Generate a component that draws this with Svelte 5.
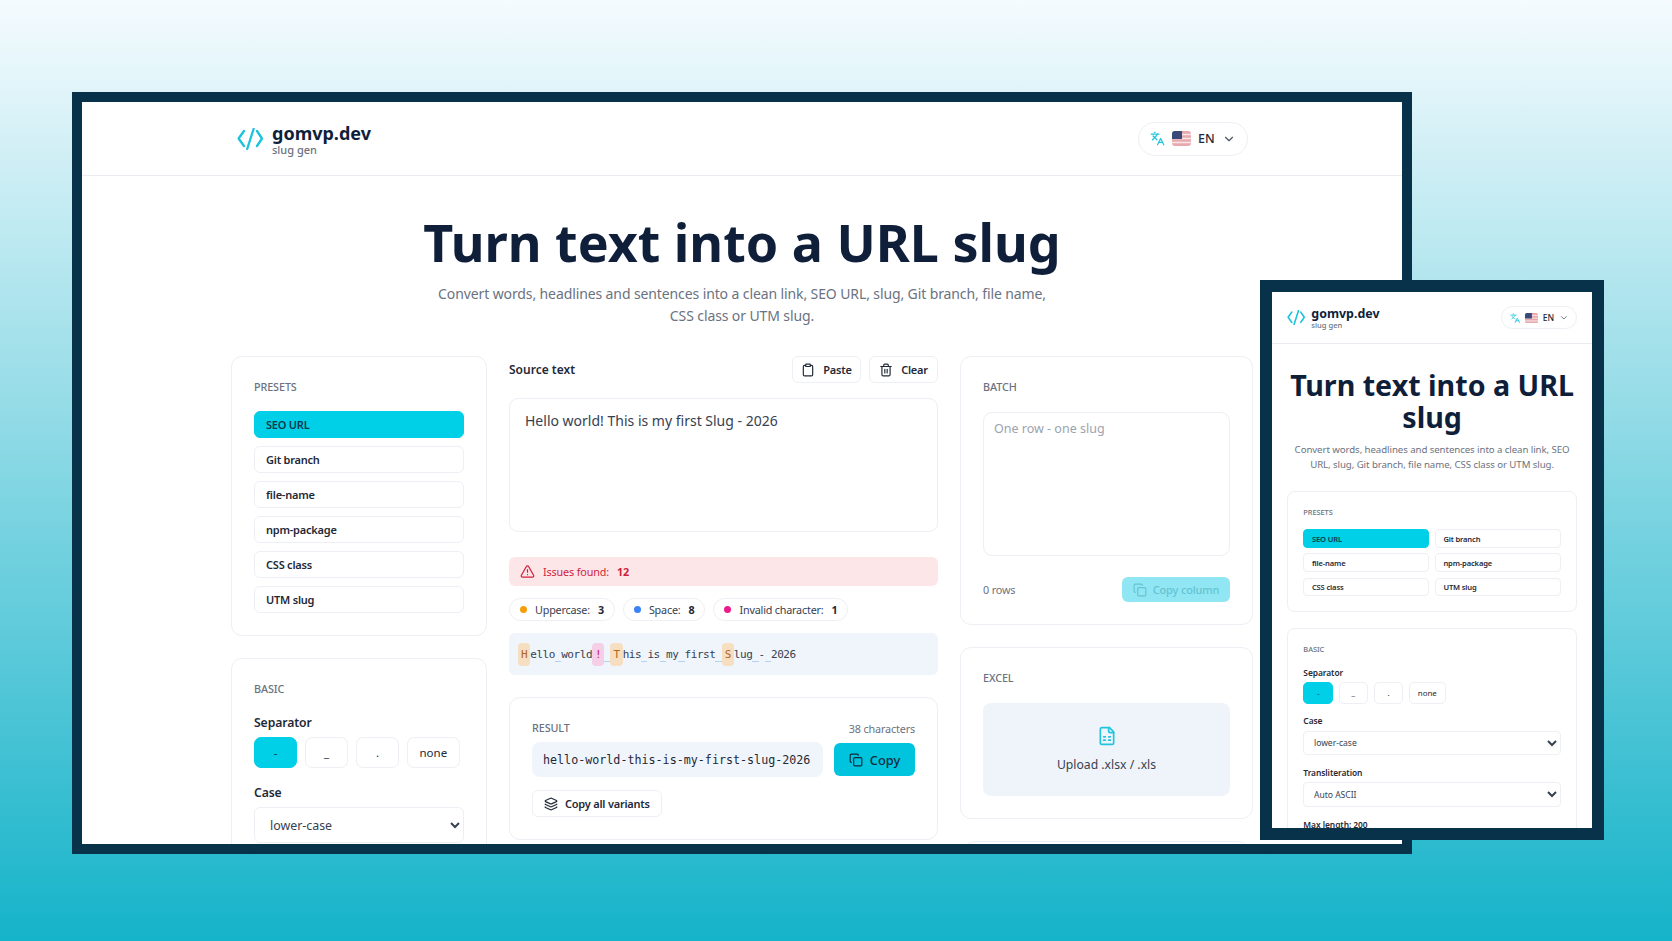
<script lang="ts">
	const presets = ['SEO URL', 'Git branch', 'file-name', 'npm-package', 'CSS class', 'UTM slug'];
	const separators = ['-', '_', '.', 'none'];
	const source = 'Hello world! This is my first Slug - 2026';
	const result = 'hello-world-this-is-my-first-slug-2026';

	const chips = [
		{ label: 'Uppercase:', value: 3, color: '#f59e0b' },
		{ label: 'Space:', value: 8, color: '#3b82f6' },
		{ label: 'Invalid character:', value: 1, color: '#ec1a8c' }
	];

	// mark every character of the preview the way the checker does
	function kind(c: string) {
		if (c === ' ') return 'sp';
		if (c >= 'A' && c <= 'Z') return 'up';
		if (c === '!') return 'bad';
		return '';
	}
	const marked = [...source].map((c) => ({ c, k: kind(c) }));
</script>

{#snippet topbar()}
	<header class="topbar">
		<div class="brand">
			<svg class="logo" viewBox="0 0 26 22" fill="none" stroke="#19c3dc" stroke-width="2.3" stroke-linecap="round" stroke-linejoin="round">
				<path d="M7 3 1.6 10.5 7 18" />
				<path d="M16.6 1 10.2 21" />
				<path d="M20 3 25 10.5 20 18" />
			</svg>
			<div>
				<div class="brand-name">gomvp.dev</div>
				<div class="brand-sub">slug gen</div>
			</div>
		</div>
		<div class="lang">
			<svg class="ic-lang" viewBox="0 0 24 24" fill="none" stroke="#22c5de" stroke-width="2" stroke-linecap="round" stroke-linejoin="round">
				<path d="m5 8 6 6" /><path d="m4 14 6-6 2-3" /><path d="M2 5h12" /><path d="M7 2h1" />
				<path d="m22 22-5-10-5 10" /><path d="M14 18h6" />
			</svg>
			<svg class="flag" viewBox="0 0 19 15">
				<rect width="19" height="15" rx="3" fill="#e8a9ae" />
				<path d="M0 3.5h19M0 7.5h19M0 11.5h19" stroke="#f7e6e8" stroke-width="1.4" />
				<path d="M3 0h7v8H0V3a3 3 0 0 1 3-3z" fill="#3a4a78" />
			</svg>
			<span>EN</span>
			<svg class="chev" viewBox="0 0 24 24" fill="none" stroke="#4b5563" stroke-width="2" stroke-linecap="round" stroke-linejoin="round"><path d="m6 9 6 6 6-6" /></svg>
		</div>
	</header>
{/snippet}

{#snippet hero()}
	<section class="hero">
		<h1>Turn text into a URL slug</h1>
		<p>Convert words, headlines and sentences into a clean link, SEO URL, slug, Git branch, file name, CSS class or UTM slug.</p>
	</section>
{/snippet}

{#snippet presetsCard()}
	<div class="card">
		<h2 class="label">Presets</h2>
		<div class="presets">
			{#each presets as p, i}
				<button class="preset" class:on={i === 0}>{p}</button>
			{/each}
		</div>
	</div>
{/snippet}

{#snippet basicCard()}
	<div class="card">
		<h2 class="label tight">Basic</h2>
		<div class="field">
			<span class="field-name">Separator</span>
			<div class="seps">
				{#each separators as s, i}
					<button class="sep" class:on={i === 0}>{s}</button>
				{/each}
			</div>
		</div>
		<div class="field">
			<span class="field-name">Case</span>
			<select><option>lower-case</option></select>
		</div>
		<div class="field">
			<span class="field-name">Transliteration</span>
			<select><option>Auto ASCII</option></select>
		</div>
		<div class="field">
			<span class="field-name">Max length: 200</span>
		</div>
	</div>
{/snippet}

{#snippet copyIcon()}
	<svg class="ic" viewBox="0 0 24 24" fill="none" stroke="currentColor" stroke-width="2" stroke-linecap="round" stroke-linejoin="round">
		<rect width="14" height="14" x="8" y="8" rx="2" ry="2" />
		<path d="M4 16c-1.1 0-2-.9-2-2V4c0-1.1.9-2 2-2h10c1.1 0 2 .9 2 2" />
	</svg>
{/snippet}

<div class="stage">
	<div class="window desktop">
		<div class="screen">
			{@render topbar()}
			{@render hero()}
			<main class="columns">
				<div class="col">
					{@render presetsCard()}
					{@render basicCard()}
				</div>

				<div class="col mid">
					<div class="source-head">
						<span class="source-title">Source text</span>
						<div class="source-actions">
							<button class="ghost">
								<svg class="ic" viewBox="0 0 24 24" fill="none" stroke="currentColor" stroke-width="2" stroke-linecap="round" stroke-linejoin="round">
									<rect width="8" height="4" x="8" y="2" rx="1" ry="1" />
									<path d="M16 4h2a2 2 0 0 1 2 2v14a2 2 0 0 1-2 2H6a2 2 0 0 1-2-2V6a2 2 0 0 1 2-2h2" />
								</svg>
								Paste
							</button>
							<button class="ghost">
								<svg class="ic" viewBox="0 0 24 24" fill="none" stroke="currentColor" stroke-width="2" stroke-linecap="round" stroke-linejoin="round">
									<path d="M3 6h18" /><path d="M19 6v14a2 2 0 0 1-2 2H7a2 2 0 0 1-2-2V6" />
									<path d="M8 6V4a2 2 0 0 1 2-2h4a2 2 0 0 1 2 2v2" /><path d="M10 11v6" /><path d="M14 11v6" />
								</svg>
								Clear
							</button>
						</div>
					</div>
					<textarea class="source" value={source}></textarea>

					<div class="issues">
						<svg class="ic-alert" viewBox="0 0 24 24" fill="none" stroke="currentColor" stroke-width="2" stroke-linecap="round" stroke-linejoin="round">
							<path d="m21.73 18-8-14a2 2 0 0 0-3.48 0l-8 14A2 2 0 0 0 4 21h16a2 2 0 0 0 1.73-3" />
							<path d="M12 9v4" /><path d="M12 17h.01" />
						</svg>
						<span>Issues found:</span>
						<b>12</b>
					</div>

					<div class="chips">
						{#each chips as chip}
							<div class="chip">
								<i class="dot" style="background: {chip.color}"></i>
								<span>{chip.label}</span>
								<b>{chip.value}</b>
							</div>
						{/each}
					</div>

					<div class="preview">
						{#each marked as m}<span class={m.k}>{m.c}</span>{/each}
					</div>

					<div class="card result">
						<div class="result-head">
							<h2 class="label flat">Result</h2>
							<span class="count">38 characters</span>
						</div>
						<div class="result-row">
							<code>{result}</code>
							<button class="copy">{@render copyIcon()}Copy</button>
						</div>
						<button class="ghost variants">
							<svg class="ic" viewBox="0 0 24 24" fill="none" stroke="currentColor" stroke-width="2" stroke-linecap="round" stroke-linejoin="round">
								<path d="M12.83 2.18a2 2 0 0 0-1.66 0L2.6 6.08a1 1 0 0 0 0 1.83l8.58 3.91a2 2 0 0 0 1.66 0l8.58-3.9a1 1 0 0 0 0-1.83z" />
								<path d="M2 12a1 1 0 0 0 .58.91l8.6 3.91a2 2 0 0 0 1.65 0l8.58-3.9A1 1 0 0 0 22 12" />
								<path d="M2 17a1 1 0 0 0 .58.91l8.6 3.91a2 2 0 0 0 1.65 0l8.58-3.9A1 1 0 0 0 22 17" />
							</svg>
							Copy all variants
						</button>
					</div>
				</div>

				<div class="col">
					<div class="card">
						<h2 class="label">Batch</h2>
						<textarea class="batch" placeholder="One row - one slug"></textarea>
						<div class="batch-foot">
							<span>0 rows</span>
							<button class="copy-col">{@render copyIcon()}Copy column</button>
						</div>
					</div>
					<div class="card">
						<h2 class="label">Excel</h2>
						<div class="drop">
							<svg class="ic-file" viewBox="0 0 24 24" fill="none" stroke="#22c5de" stroke-width="2" stroke-linecap="round" stroke-linejoin="round">
								<path d="M15 2H6a2 2 0 0 0-2 2v16a2 2 0 0 0 2 2h12a2 2 0 0 0 2-2V7Z" />
								<path d="M14 2v4a2 2 0 0 0 2 2h4" />
								<path d="M8 13h2" /><path d="M14 13h2" /><path d="M8 17h2" /><path d="M14 17h2" />
							</svg>
							<span>Upload .xlsx / .xls</span>
						</div>
					</div>
					<div class="card stub"></div>
				</div>
			</main>
		</div>
	</div>

	<div class="window phone">
		<div class="screen">
			<div class="scaled">
				{@render topbar()}
				{@render hero()}
				<main class="stack">
					{@render presetsCard()}
					{@render basicCard()}
				</main>
			</div>
		</div>
	</div>
</div>

<style>
	:global(body) {
		margin: 0;
		font-family: 'Noto Sans', 'Open Sans', sans-serif;
		color: #1f2937;
	}

	.stage {
		position: relative;
		width: 1672px;
		height: 941px;
		overflow: hidden;
		background: linear-gradient(#f5fbfe, #15b3c9);
	}

	.window {
		position: absolute;
		box-sizing: border-box;
		border-style: solid;
		border-color: #07324a;
		background: #fff;
	}

	.desktop {
		left: 72px;
		top: 92px;
		width: 1340px;
		height: 762px;
		border-width: 10px;
	}

	.phone {
		left: 1260px;
		top: 280px;
		width: 344px;
		height: 560px;
		border-width: 12px;
	}

	.screen {
		width: 100%;
		height: 100%;
		overflow: hidden;
	}

	.scaled {
		width: 464px;
		zoom: 0.69;
	}

	.topbar {
		box-sizing: border-box;
		height: 74px;
		display: flex;
		align-items: center;
		justify-content: space-between;
		padding: 0 154px 0 155px;
		border-bottom: 1px solid #e9ecf0;
	}

	.brand {
		display: flex;
		align-items: center;
		gap: 9px;
	}

	.logo {
		width: 26px;
		height: 22px;
	}

	.brand-name {
		margin-top: 2px;
		font-size: 18px;
		font-weight: 700;
		line-height: 22px;
		color: #0f1f3a;
	}

	.brand-sub {
		margin-top: -1px;
		font-size: 11px;
		font-weight: 500;
		line-height: 14px;
		color: #6b7280;
	}

	.lang {
		box-sizing: border-box;
		height: 34px;
		width: 110px;
		display: flex;
		align-items: center;
		padding-left: 11px;
		border: 1px solid #eceff3;
		border-radius: 17px;
		font-size: 12.5px;
		font-weight: 500;
		color: #1f2937;
	}

	.ic-lang {
		width: 15px;
		height: 15px;
		margin-right: 7px;
	}

	.flag {
		width: 19px;
		height: 15px;
		margin-right: 7px;
	}

	.chev {
		width: 14px;
		height: 14px;
		margin-left: 7px;
	}

	.hero {
		padding-top: 36px;
		text-align: center;
	}

	.hero h1 {
		margin: 0;
		font-size: 52px;
		line-height: 60px;
		font-weight: 700;
		color: #0f1f3a;
	}

	.hero p {
		max-width: 620px;
		margin: 11px auto 29px;
		font-size: 14px;
		letter-spacing: -0.11px;
		line-height: 22px;
		color: #6b7280;
	}

	.columns {
		box-sizing: border-box;
		width: 1023px;
		margin-left: 149px;
		display: grid;
		grid-template-columns: 256px 429px 293px;
		column-gap: 22px;
		align-items: start;
	}

	.col {
		display: flex;
		flex-direction: column;
		gap: 22px;
	}

	.mid {
		gap: 0;
	}

	.card {
		border: 1px solid #eceff3;
		border-radius: 11px;
		padding: 22px;
		background: #fff;
	}

	.stub {
		height: 40px;
		margin: 0 4px;
	}

	.label {
		margin: 0 0 17px;
		font-size: 10.8px;
		letter-spacing: -0.1px;
		line-height: 16px;
		font-weight: 500;
		text-transform: uppercase;
		color: #6b7280;
	}

	.label.tight {
		margin-bottom: 16px;
	}

	.label.flat {
		margin: 0;
	}

	button {
		font: inherit;
		color: inherit;
	}

	.presets {
		display: flex;
		flex-direction: column;
		gap: 8px;
		margin-top: -1px;
	}

	.preset {
		height: 27px;
		padding: 0 11px;
		text-align: left;
		font-size: 11px;
		letter-spacing: -0.22px;
		font-weight: 600;
		background: #fff;
		border: 1px solid #eceff3;
		border-radius: 6px;
	}

	.preset.on,
	.sep.on {
		background: #00cfe8;
		border-color: #00cfe8;
		color: #0b3a4a;
	}

	.field {
		display: flex;
		flex-direction: column;
		gap: 4px;
		margin-bottom: 15px;
	}

	.field-name {
		font-size: 12.2px;
		letter-spacing: -0.1px;
		line-height: 20px;
		font-weight: 600;
		color: #1f2937;
	}

	.seps {
		display: flex;
		gap: 8px;
	}

	.sep {
		min-width: 43px;
		height: 31px;
		padding: 0 11.5px;
		font-size: 11.5px;
		background: #fff;
		border: 1px solid #eceff3;
		border-radius: 7px;
	}

	select {
		width: 100%;
		height: 36px;
		padding-left: 11px;
		font: inherit;
		font-size: 12.4px;
		color: #374151;
		background: #fff;
		border: 1px solid #eceff3;
		border-radius: 6px;
	}

	.source-head {
		display: flex;
		align-items: center;
		justify-content: space-between;
		height: 27px;
		margin-bottom: 15px;
	}

	.source-title {
		font-size: 12px;
		font-weight: 600;
		color: #1f2937;
	}

	.source-actions {
		display: flex;
		gap: 8px;
	}

	.ghost {
		height: 27px;
		display: inline-flex;
		align-items: center;
		gap: 9px;
		padding: 0 11px;
		font-size: 11px;
		letter-spacing: -0.22px;
		font-weight: 600;
		background: #fff;
		border: 1px solid #eceff3;
		border-radius: 6px;
	}

	.source-actions .ghost {
		width: 69px;
		padding: 0;
		gap: 8px;
		justify-content: center;
	}

	.ic {
		width: 14px;
		height: 14px;
		flex: none;
	}

	textarea {
		box-sizing: border-box;
		display: block;
		width: 100%;
		resize: none;
		outline: none;
		font: inherit;
		background: #fff;
		border: 1px solid #eceff3;
		border-radius: 9px;
	}

	.source {
		height: 134px;
		padding: 12px 15px;
		font-size: 14px;
		color: #374151;
		margin-bottom: 25px;
	}

	.issues {
		height: 29px;
		display: flex;
		align-items: center;
		gap: 8px;
		padding-left: 11px;
		margin-bottom: 12px;
		font-size: 10.8px;
		letter-spacing: -0.15px;
		color: #cf1f3c;
		background: #fde6e8;
		border-radius: 6px;
	}

	.ic-alert {
		width: 15px;
		height: 15px;
	}

	.chips {
		display: flex;
		gap: 8px;
		margin-bottom: 12px;
	}

	.chip {
		box-sizing: border-box;
		height: 23px;
		display: flex;
		align-items: center;
		gap: 8px;
		padding: 0 10px;
		font-size: 10.8px;
		letter-spacing: -0.2px;
		color: #374151;
		border: 1px solid #eceff3;
		border-radius: 12px;
	}

	.chip b {
		color: #1f2937;
	}

	.dot {
		width: 7px;
		height: 7px;
		border-radius: 50%;
	}

	.preview {
		box-sizing: border-box;
		height: 42px;
		display: flex;
		align-items: center;
		padding-left: 9px;
		margin-bottom: 22px;
		white-space: pre;
		font-family: 'DejaVu Sans Mono', monospace;
		font-size: 11px;
		letter-spacing: -0.45px;
		color: #374151;
		background: #eff5fb;
		border-radius: 6px;
	}

	.preview .up,
	.preview .bad {
		line-height: 23px;
		padding: 0 3px;
		border-radius: 4px;
	}

	.preview .up {
		color: #b4651a;
		background: #f6dfc0;
	}

	.preview .bad {
		color: #c2187a;
		background: #f5cfe6;
	}

	.preview .sp {
		box-shadow: inset 0 -1px 0 #b4d3f2;
		line-height: 15px;
	}

	.result-head {
		display: flex;
		align-items: center;
		justify-content: space-between;
		height: 16px;
		margin-bottom: 6px;
	}

	.count {
		font-size: 10.8px;
		letter-spacing: -0.15px;
		color: #6b7280;
	}

	.result-row {
		display: flex;
		align-items: center;
		gap: 11px;
		margin-bottom: 13px;
	}

	.result-row code {
		flex: 1;
		height: 35px;
		padding-left: 11px;
		display: flex;
		align-items: center;
		font-family: 'DejaVu Sans Mono', monospace;
		font-size: 11.7px;
		color: #1f2937;
		background: #eff5fb;
		border-radius: 8px;
	}

	.copy {
		width: 81px;
		height: 33px;
		display: flex;
		align-items: center;
		justify-content: center;
		gap: 7px;
		font-size: 12.8px;
		font-weight: 500;
		color: #0f2a3a;
		background: #00c3de;
		border: none;
		border-radius: 6px;
	}

	.variants {
		padding: 0 11px;
		gap: 7px;
	}

	.batch {
		height: 144px;
		margin-top: 1px;
		padding: 7px 10px;
		font-size: 12.5px;
		margin-bottom: 21px;
	}

	.batch::placeholder {
		color: #9ca3af;
	}

	.batch-foot {
		display: flex;
		align-items: center;
		justify-content: space-between;
		font-size: 10.8px;
		letter-spacing: -0.15px;
		color: #6b7280;
	}

	.copy-col {
		width: 108px;
		height: 25px;
		display: flex;
		align-items: center;
		justify-content: center;
		gap: 6px;
		font-size: 11px;
		letter-spacing: -0.15px;
		font-weight: 500;
		color: #64c3d4;
		background: #90e6f2;
		border: none;
		border-radius: 6px;
	}

	.drop {
		height: 93px;
		display: flex;
		flex-direction: column;
		align-items: center;
		justify-content: center;
		gap: 10px;
		font-size: 12.2px;
		color: #374151;
		background: #eff4fa;
		border-radius: 8px;
	}

	.ic-file {
		width: 20px;
		height: 20px;
	}

	/* phone frame: same parts, reflowed */
	.phone .topbar {
		height: 76px;
		padding: 0 22px;
	}

	.phone .hero {
		padding: 35.5px 22px 0;
	}

	.phone .hero h1 {
		font-size: 41.5px;
		line-height: 47px;
	}

	.phone .hero p {
		margin: 12px auto 27px;
	}

	.stack {
		margin: 0 22px;
		display: flex;
		flex-direction: column;
		gap: 22px;
	}

	.phone .presets {
		display: grid;
		grid-template-columns: 1fr 1fr;
	}
</style>
